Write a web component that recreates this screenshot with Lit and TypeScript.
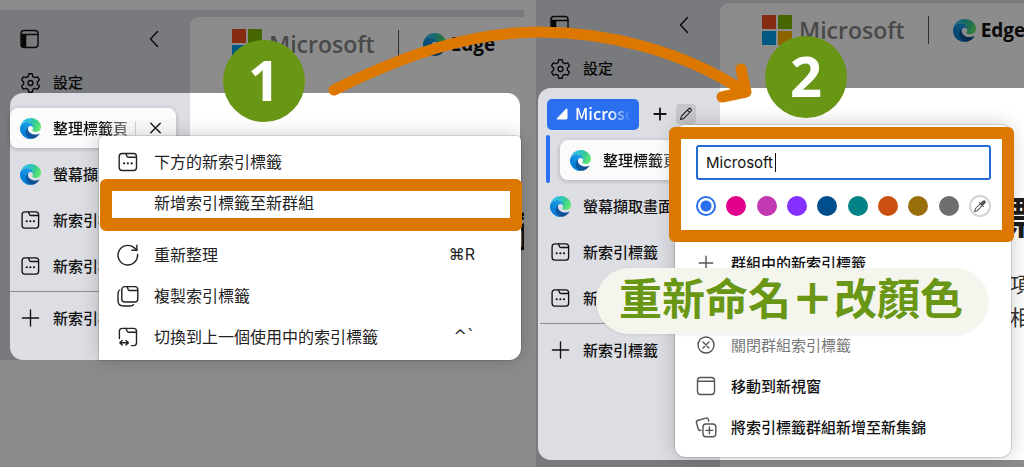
import { LitElement, html, css, svg, nothing } from "lit";
import { customElement, property } from "lit/decorators.js";

/* ---------- icons ---------- */

const stroke = (body: unknown, size = 22) => html`<svg
  class="icon" width=${size} height=${size} viewBox="0 0 22 22" fill="none"
  stroke="currentColor" stroke-width="1.4" stroke-linecap="round" stroke-linejoin="round"
  aria-hidden="true">${body}</svg>`;

const icons = {
  panel: stroke(svg`<rect x="2" y="2.5" width="17" height="17" rx="3"/><path d="M2.5 6.5H19"/><path d="M3 6.8H6.6V19H4.6Q3 19 3 17Z" fill="currentColor"/>`),
  back: stroke(svg`<path d="M14.5 3.5L7.5 11L14.5 18.5"/>`),
  gear: stroke(svg`<circle cx="11" cy="11" r="2.6"/><path d="M9.2 1.3H12.8L13.5 4.3L15.5 5.4L18.5 4.5L20.4 7.7L18.2 9.9V12.1L20.4 14.3L18.5 17.5L15.5 16.6L13.5 17.7L12.8 20.7H9.2L8.5 17.7L6.5 16.6L3.5 17.5L1.6 14.3L3.8 12.1V9.9L1.6 7.7L3.5 4.5L6.5 5.4L8.5 4.3Z"/>`),
  tab: stroke(svg`<rect x="2.2" y="2.5" width="17.3" height="17" rx="3"/><path d="M8.8 2.7L10.2 5.6Q10.6 6.3 11.6 6.3H19.3"/><path d="M7 12.3h.1M10.8 12.3h.1M14.6 12.3h.1" stroke-width="2.2"/>`),
  plus: stroke(svg`<path d="M11 2.5V19.5M2.5 11H19.5"/>`),
  close: stroke(svg`<path d="M6 6L16 16M16 6L6 16"/>`),
  refresh: stroke(svg`<path d="M20.6 10.5A9.8 9.8 0 1 1 17 3.6L19.8 6"/><path d="M19.9 1.2V6.2H14.8"/>`),
  copy: stroke(svg`<rect x="4.8" y="1.6" width="16" height="15.4" rx="3"/><path d="M10.2 1.8L11.2 4.6Q11.6 5.5 12.6 5.5H20.6"/><path d="M2.8 5Q1 6 1 8.5V15.5Q1 21 6.5 21H13Q15.8 21 16.6 19.5"/>`),
  swap: stroke(svg`<path d="M2.4 12.5V5.3Q2.4 2.4 5.3 2.4H16.6Q19.5 2.4 19.5 5.3V16.7Q19.5 19.6 16.6 19.6H14.4"/><path d="M9 2.6L10.3 5.5Q10.7 6.3 11.6 6.3H19.3"/><path d="M3.2 16.8H11M5.2 14.5L2.8 16.8L5.2 19.1M9 14.5L11.4 16.8L9 19.1"/>`),
  pencil: stroke(svg`<path d="M3.5 18.5L4.8 13.8L14.6 4Q16.2 2.6 17.6 4Q19.2 5.6 17.8 7.2L8 17.1ZM13 5.7L16.2 8.9"/>`, 20),
  smallPlus: stroke(svg`<path d="M11 4.3V17.7M4.3 11H17.7"/>`),
  boldPlus: stroke(svg`<path d="M11 5.3V16.7M5.3 11H16.7" stroke-width="1.8"/>`),
  closeRing: stroke(svg`<circle cx="11" cy="11" r="8"/><path d="M8 8L14 14M14 8L8 14"/>`),
  windowed: stroke(svg`<rect x="2.5" y="2.5" width="17" height="17" rx="3"/><path d="M2.7 6.3H19.3"/>`),
  collection: stroke(svg`<rect x="8" y="8" width="12.8" height="12.8" rx="3"/><path d="M14.4 11V17.8M11 14.4H17.8"/><path d="M13.8 5.2L13.3 3.4Q12.8 1.6 11 2.1L3.2 4.2Q1 4.8 1.4 6.8L3.2 12.8Q3.8 14.8 6 14.4"/>`),
  dropper: stroke(svg`<path d="M3.5 18.5L4.6 14.8L11.5 7.9L14.1 10.5L7.2 17.4Z"/><path d="M10.2 6.4L15.6 11.8M12.2 7.4L15.2 4.4Q16.6 3.2 17.8 4.2T17.8 6.8L14.6 9.8Z" fill="currentColor"/>`, 18),
  wedge: html`<svg class="icon" width="12" height="12" viewBox="0 0 12 12" aria-hidden="true"><path d="M10 .8Q11.5 0 11.5 1.8V10Q11.5 11.5 10 11.5H1.5Q0 11.5 1 10.2Z" fill="#fff"/></svg>`,
};

const edge = (size: number) => html`<svg class="icon" width=${size} height=${size} viewBox="0 0 256 256" aria-hidden="true">
  <defs>
    <linearGradient id="a" x1=".1" y1=".5" x2="1" y2=".6"><stop stop-color="#0c59a4"/><stop offset="1" stop-color="#114a8b"/></linearGradient>
    <linearGradient id="b" x1=".9" y1=".3" x2=".2" y2="1"><stop stop-color="#1b9de2"/><stop offset=".3" stop-color="#1595df"/><stop offset=".7" stop-color="#0680d7"/><stop offset="1" stop-color="#0078d4"/></linearGradient>
    <linearGradient id="c" x1="0" y1=".3" x2="1" y2=".6"><stop stop-color="#35c1f1"/><stop offset=".3" stop-color="#2cc3d9"/><stop offset=".65" stop-color="#36c993"/><stop offset="1" stop-color="#66eb6e"/></linearGradient>
  </defs>
  <g transform="translate(-4.63 -4.92)">
    <path fill="url(#a)" d="M235.68 195.46a93.73 93.73 0 0 1-10.54 4.71 101.87 101.87 0 0 1-35.9 6.46c-47.32 0-88.54-32.55-88.54-74.32A31.48 31.48 0 0 1 117.13 105c-42.8 1.8-53.8 46.4-53.8 72.53 0 73.88 68.09 81.37 82.76 81.37 7.91 0 19.84-2.3 27-4.56l1.31-.44a128.34 128.34 0 0 0 66.6-52.8 4 4 0 0 0-5.32-5.64Z"/>
    <path fill="url(#b)" d="M110.34 246.34A79.2 79.2 0 0 1 87.6 225a80.72 80.72 0 0 1 29.53-120c3.12-1.47 8.45-4.13 15.54-4a32.35 32.35 0 0 1 25.69 13 31.88 31.88 0 0 1 6.36 18.66c0-.21 24.46-79.6-80-79.6-43.9 0-80 41.66-80 78.21a130.15 130.15 0 0 0 12.11 56 128 128 0 0 0 156.38 67.11 75.55 75.55 0 0 1-62.78-8Z"/>
    <path fill="url(#c)" d="M156.94 153.78c-.81 1.05-3.3 2.5-3.3 5.66 0 2.61 1.7 5.12 4.72 7.23 14.38 10 41.49 8.68 41.56 8.68a59.56 59.56 0 0 0 30.27-8.35A61.38 61.38 0 0 0 260.67 114c.26-22.41-8-37.31-11.34-43.91C228.09 28.76 182.35 5 132.61 5A128 128 0 0 0 4.63 131.2C5.11 94.7 40.72 53.06 84.63 53.06c3.5 0 23.46.34 42 10.07 16.34 8.58 24.9 18.94 30.85 29.21 6.18 10.67 7.28 24.15 7.28 29.52s-2.74 25.47-7.82 31.92Z"/>
  </g>
</svg>`;

const base = css`
  * { box-sizing: border-box; }
  button {
    font: inherit; color: inherit; text-align: left;
    background: none; border: 0; padding: 0; margin: 0;
  }
  .icon { display: block; flex: none; }
`;

/* ---------- browser window with vertical tabs ---------- */

@customElement("browser-window")
class BrowserWindow extends LitElement {
  @property({ type: Boolean, reflect: true }) grouped = false;

  static styles = [base, css`
    :host {
      display: grid;
      grid-template-columns: 190px minmax(0, 1fr);
      background: #dcdee3;
      color: #111;
      overflow: hidden;
      padding-top: 7px;
    }
    :host([grouped]) { grid-template-columns: 184px minmax(0, 1fr); padding-top: 3px; }

    .side { padding: 1px 10px 19px; font-size: 15px; font-weight: 500; white-space: nowrap; min-width: 0; }
    :host([grouped]) .side { padding-left: 4px; }
    .bar { display: flex; align-items: center; justify-content: space-between; height: 42px; padding: 0 15px 0 9px; }
    .row { display: flex; align-items: center; gap: 12px; width: 100%; height: 46px; padding-left: 10px; }
    .row.settings { height: 45px; }
    .row span, .chip span { padding-bottom: 2px; }
    .row .icon { width: 21px; }
    .row.active { height: 40px; margin: 3px 0; width: 166px; background: #fbfbfb; border-radius: 8px; box-shadow: 0 1px 5px rgba(0, 0, 0, .22); }
    .member { display: flex; position: relative; padding-left: 20px; }
    .member::before { content: ""; position: absolute; left: 6px; top: -2px; bottom: 0; width: 4px; border-radius: 2px; background: #2a6ff0; }
    .title { flex: 1; overflow: hidden; text-align: left; -webkit-mask-image: linear-gradient(90deg, #000 50px, rgba(0, 0, 0, .3) 84px); mask-image: linear-gradient(90deg, #000 50px, rgba(0, 0, 0, .3) 84px); }
    .close { border-left: 1px solid #d0d0d0; padding: 0 9px; margin-left: -6px; height: 14px; display: flex; align-items: center; }
    .active .title { flex: 0 0 76px; }
    .rule { border: 0; border-top: 1px solid #8c8e92; margin: 2px 0 3px; width: 170px; }

    .group { display: flex; align-items: center; height: 46px; padding-left: 7px; }
    .chip { display: flex; align-items: center; gap: 7px; width: 92px; height: 31px; padding: 0 9px 0 9px; border-radius: 5px; background: #2a6ff0; color: #fff; font-size: 16px; overflow: hidden; }
    .chip span { overflow: hidden; -webkit-mask-image: linear-gradient(90deg, #000 35px, transparent 56px); mask-image: linear-gradient(90deg, #000 35px, transparent 56px); }
    .add { margin-left: 10px; }
    .edit { margin-left: 5px; display: grid; place-items: center; width: 20px; height: 20px; border-radius: 4px; background: #c6c7ca; }
    .edit .icon { width: 16px; }

    .page { background: #fff; border-top-left-radius: 9px; padding: 12px 0 0 42px; overflow: hidden; white-space: nowrap; font-family: "Open Sans", "Noto Sans CJK TC", sans-serif; }
    .brand { display: flex; align-items: center; height: 30px; }
    .brand > * { flex: none; }
    .squares { display: grid; grid-template-columns: 14px 14px; grid-auto-rows: 14px; gap: 2px; }
    .sq1 { background: #f25022; } .sq2 { background: #7fba00; } .sq3 { background: #00a4ef; } .sq4 { background: #ffb900; }
    .ms { margin-left: 7px; font-size: 23px; font-weight: 600; color: #858585; line-height: 30px; }
    .sep { width: 1px; height: 28px; margin: 0 24px 0 23px; background: #555; }
    .edge { margin-left: 5px; font-size: 19px; font-weight: 700; color: #111; }
    h1 { margin: 148px 0 27px 230px; font-size: 44px; line-height: 48px; font-weight: 700; color: #1b1b1b; }
    p { margin: 0 0 0 248px; font-size: 21px; line-height: 33px; color: #333; }
  `];

  private tab(icon: unknown, label: string) {
    return html`<button class="row">${icon}<span>${label}</span></button>`;
  }

  render() {
    const active = html`<div class="row active">${edge(21)}<span class="title">整理標籤頁</span>
      ${this.grouped ? nothing : html`<button class="close" aria-label="關閉">${icons.close}</button>`}</div>`;
    return html`
      <nav class="side">
        <div class="bar"><button aria-label="面板">${icons.panel}</button><button aria-label="返回">${icons.back}</button></div>
        <button class="row settings">${icons.gear}<span>設定</span></button>
        ${this.grouped
          ? html`<div class="group">
              <button class="chip">${icons.wedge}<span>Microsoft</span></button>
              <button class="add" aria-label="新增">${icons.boldPlus}</button>
              <button class="edit" aria-label="編輯">${icons.pencil}</button>
            </div>
            <div class="member">${active}</div>`
          : active}
        ${this.tab(edge(21), this.grouped ? "螢幕擷取畫面" : "螢幕擷")}
        ${this.tab(icons.tab, "新索引標籤")}
        ${this.tab(icons.tab, "新索引標籤")}
        <hr class="rule" />
        ${this.tab(icons.plus, "新索引標籤")}
      </nav>
      <main class="page">
        <div class="brand">
          <div class="squares"><i class="sq1"></i><i class="sq2"></i><i class="sq3"></i><i class="sq4"></i></div>
          <span class="ms">Microsoft</span><i class="sep"></i>${edge(23)}<span class="edge">Edge</span>
        </div>
        <h1>標籤</h1>
        <p>項目</p>
        <p>相關</p>
      </main>`;
  }
}

/* ---------- tab context menu ---------- */

@customElement("tab-menu")
class TabMenu extends LitElement {
  static styles = [base, css`
    :host {
      display: block; background: #fff; color: #222; padding: 5px 0 3px;
      border-radius: 5px 5px 12px 0; font-size: 16px;
      box-shadow: 0 0 0 1px rgba(0, 0, 0, .12), 0 0 20px rgba(0, 0, 0, .2);
    }
    .item { display: grid; grid-template-columns: 22px 1fr auto; gap: 15px; align-items: center; width: 100%; height: 41px; padding: 0 46px 0 18px; position: relative; }
    .item.marked { margin-bottom: 11px; }
    .item.marked::after { content: ""; position: absolute; inset: -3px -1px -8px 1px; border: 12px solid #dc7800; border-bottom-width: 13px; border-radius: 6px; }
    .label { grid-column: 2; }
    .keys { font-family: Inter, "DejaVu Sans", sans-serif; }
    .keys.ctrl { font-family: "DejaVu Sans", sans-serif; }
  `];

  private items: { label: string; icon?: unknown; keys?: string; ctrl?: boolean; marked?: boolean }[] = [
    { label: "下方的新索引標籤", icon: icons.tab },
    { label: "新增索引標籤至新群組", marked: true },
    { label: "重新整理", icon: icons.refresh, keys: "⌘R" },
    { label: "複製索引標籤", icon: icons.copy },
    { label: "切換到上一個使用中的索引標籤", icon: icons.swap, keys: "^`", ctrl: true },
  ];

  render() {
    return this.items.map((i) => html`<button class="item ${i.marked ? "marked" : ""}">
      ${i.icon ?? nothing}<span class="label">${i.label}</span>
      ${i.keys ? html`<span class="keys ${i.ctrl ? "ctrl" : ""}">${i.keys}</span>` : nothing}
    </button>`);
  }
}

/* ---------- group editor ---------- */

@customElement("group-editor")
class GroupEditor extends LitElement {
  static styles = [base, css`
    :host {
      display: block; background: #fff; color: #111; padding: 20px 20px 10px 21px;
      border-radius: 10px; font-size: 15px; font-weight: 500;
      box-shadow: 0 0 0 1px rgba(0, 0, 0, .12), 0 0 20px rgba(0, 0, 0, .22);
    }
    .form { position: relative; display: grid; gap: 15px; margin-bottom: 25px; }
    .form::after { content: ""; position: absolute; inset: -18px -23px -25px -27px; border: 12px solid #dc7800; border-radius: 6px; pointer-events: none; }
    .field { position: relative; display: block; }
    .name { display: block; width: 100%; height: 35px; border: 2px solid #246bd6; border-radius: 3px; padding: 0 8px; font: 400 15px Inter, sans-serif; color: #111; background: #fff; outline: 0; }
    .caret { position: absolute; left: 79px; top: 8px; width: 1px; height: 19px; background: #111; }
    .colors { display: flex; align-items: center; justify-content: space-between; height: 22px; }
    .dot { appearance: none; margin: 0; width: 20px; height: 20px; border-radius: 50%; background: var(--c); }
    .dot:checked { border: 2px solid var(--c); background: radial-gradient(circle, var(--c) 5px, #fff 6px); }
    .pick { display: grid; place-items: center; width: 22px; height: 22px; border: 2px solid #d4d4d4; border-radius: 50%; color: #555; }
    .pick .icon { width: 16px; height: 16px; }
    .item { display: flex; align-items: center; gap: 14px; width: 100%; height: 41px; }
    .item .icon { width: 22px; margin-left: -1px; color: #555; }
    .item.off { margin-top: 41px; color: #777; font-weight: 400; }
  `];

  private colors = ["#2a6ff0", "#e3008c", "#c239b3", "#8430ff", "#004e8c", "#038387", "#ca5010", "#986f0b", "#6e6e6e"];

  render() {
    return html`
      <div class="form">
        <label class="field"><input class="name" aria-label="群組名稱" .value=${"Microsoft"} /><i class="caret"></i></label>
        <div class="colors" role="radiogroup">
          ${this.colors.map((c, i) => html`<input class="dot" type="radio" name="color" aria-label=${c} style="--c:${c}" ?checked=${i === 0} />`)}
          <button class="pick" aria-label="自訂色彩">${icons.dropper}</button>
        </div>
      </div>
      <button class="item">${icons.smallPlus}<span>群組中的新索引標籤</span></button>
      <button class="item off" disabled>${icons.closeRing}<span>關閉群組索引標籤</span></button>
      <button class="item">${icons.windowed}<span>移動到新視窗</span></button>
      <button class="item">${icons.collection}<span>將索引標籤群組新增至新集錦</span></button>`;
  }
}

/* ---------- annotated tutorial ---------- */

@customElement("app-root")
class AppRoot extends LitElement {
  static styles = [base, css`
    :host {
      display: grid; grid-template-columns: minmax(0, 536fr) minmax(0, 488fr);
      position: relative; min-height: 100vh; overflow: hidden; background: #fff;
      font-family: "Noto Sans CJK TC", "Noto Sans", sans-serif; line-height: 1.4;
    }
    .pane { position: relative; overflow: hidden; display: grid; }
    .first { padding: 10px 12px 0 0; align-content: start; }
    .spot { position: absolute; border-radius: 13px; box-shadow: 0 0 0 2000px rgba(0, 0, 0, .45); }
    .first .frame { position: relative; display: grid; }
    .first .spot { inset: 83px 4px 0 10px; }
    .second .spot { inset: 88px -20px 7px 2px; }
    .first tab-menu { position: absolute; left: 99px; right: 3px; top: 126px; }
    .second group-editor { position: absolute; left: 139px; right: 13px; top: 125px; }
    .step { position: absolute; display: grid; place-items: center; width: 82px; height: 82px; border-radius: 50%; background: #6a9615; color: #fff; font: 700 56px/78px "Noto Sans", sans-serif; padding-bottom: 4px; }
    .one { left: 223px; top: 40px; }
    .two { left: 229px; top: 36px; }
    .arrow { position: absolute; left: 0; top: 0; width: 100%; pointer-events: none; }
    .caption { position: absolute; left: 596px; top: 268px; padding: 0 25px 10px 23px; border-radius: 33px; background: #f4f6ee; box-shadow: 0 1px 3px rgba(0, 0, 0, .08); color: #6a9615; font-size: 43px; line-height: 56px; font-weight: 700; white-space: nowrap; }
    .heavy { font-weight: 900; }
  `];

  render() {
    return html`
      <section class="pane first">
        <div class="frame">
          <browser-window></browser-window>
          <div class="spot"></div>
          <tab-menu></tab-menu>
        </div>
        <span class="step one">1</span>
      </section>
      <section class="pane second">
        <browser-window grouped></browser-window>
        <div class="spot"></div>
        <group-editor></group-editor>
        <span class="step two">2</span>
      </section>
      <svg class="arrow" viewBox="0 0 1024 110" fill="none" stroke="#dc7800" stroke-width="11" stroke-linecap="round" stroke-linejoin="round" aria-hidden="true">
        <path d="M334 90C410 52 475 32 540 32S682 50 745 92M741 69L746 92L722 97"/>
      </svg>
      <strong class="caption">重新命名<span class="heavy">＋</span>改顏色</strong>`;
  }
}
